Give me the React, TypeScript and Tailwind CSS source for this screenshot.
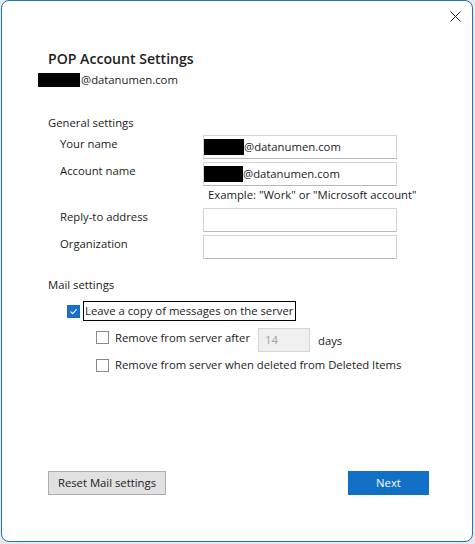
import React from "react"

function Redact({ w = 40 }: { w?: number }) {
  return <span className="inline-block h-[16px] bg-black shrink-0" style={{ width: w }} />
}

function Field({ children }: { children?: React.ReactNode }) {
  return (
    <div className="w-[194px] h-[24px] border border-[#d4d4d4] border-b-[#b8b8b8] bg-white flex items-center">
      {children}
    </div>
  )
}

function Row({ label, children }: { label: string; children?: React.ReactNode }) {
  return (
    <div className="flex items-start ml-[58px]">
      <div className="w-[143px] mt-[1px] leading-[16px] h-[16px]">{label}</div>
      {children}
    </div>
  )
}

function Check({ checked = false }: { checked?: boolean }) {
  return checked ? (
    <div className="w-[13px] h-[13px] bg-[#1a6fc7] flex items-center justify-center shrink-0">
      <svg width="9" height="9" viewBox="0 0 9 9">
        <path d="M1.5 4.6 L3.6 6.6 L7.6 2.4" stroke="white" strokeWidth="1.2" fill="none" />
      </svg>
    </div>
  ) : (
    <div className="block w-[13px] h-[13px] border border-[#8a8a8a] bg-white shrink-0" />
  )
}

export default function App() {
  return (
    <div className="w-[475px] h-[544px] bg-[#e9e9e9] overflow-hidden font-['Open_Sans',sans-serif] text-[11.3px] text-[#1b1b1b]">
      <div className="relative ml-[1px] w-[472px] h-[542px] bg-white border border-[#1e73c8] rounded-[8px] flex flex-col">
        <svg className="absolute right-[11px] top-[10px]" width="11" height="11" viewBox="0 0 11 11">
          <path d="M0.5 0.5 L10.5 10.5 M10.5 0.5 L0.5 10.5" stroke="#222" strokeWidth="1" />
        </svg>

        <div className="mt-[48px] ml-[46px] text-[14.1px] leading-[20px] font-semibold text-[#222]">
          POP Account Settings
        </div>
        <div className="mt-[3px] ml-[36px] flex items-center leading-[16px] h-[16px]">
          <span className="inline-block w-[42px] h-[14px] bg-black" />
          <span className="ml-[1px]">@datanumen.com</span>
        </div>

        <div className="mt-[27px] ml-[46px] leading-[16px]">General settings</div>

        <div className="mt-[4px] flex flex-col gap-[3px]">
          <Row label="Your name">
            <Field>
              <Redact />
              <span>@datanumen.com</span>
            </Field>
          </Row>
          <Row label="Account name">
            <Field>
              <Redact w={39} />
              <span>@datanumen.com</span>
            </Field>
          </Row>
        </div>
        <div className="mt-[1px] ml-[206px] leading-[16px]">Example: "Work" or "Microsoft account"</div>

        <div className="mt-[5px] flex flex-col gap-[3px]">
          <Row label="Reply-to address">
            <Field />
          </Row>
          <Row label="Organization">
            <Field />
          </Row>
        </div>

        <div className="mt-[18px] ml-[46px] leading-[16px]">Mail settings</div>

        <div className="mt-[8px] ml-[65px] flex items-center">
          <Check checked />
          <span className="ml-[3px] h-[20px] border border-black pl-[1px] pr-[2px] leading-[18px]">
            Leave a copy of messages on the server
          </span>
        </div>

        <div className="mt-[7px] ml-[94px] flex items-start h-[24px]">
          <div className="mt-[3px]">
            <Check />
          </div>
          <span className="ml-[6px] mt-[2px] leading-[16px] w-[143px]">Remove from server after</span>
          <div className="w-[52px] h-[24px] border border-[#d6d6d6] bg-[#f0f0f0] text-[#a0a0a0] flex items-center pl-[6px]">
            14
          </div>
          <span className="ml-[8px] mt-[5px] leading-[16px]">days</span>
        </div>

        <div className="mt-[5px] ml-[94px] flex items-center">
          <Check />
          <span className="ml-[6px] leading-[16px]">Remove from server when deleted from Deleted Items</span>
        </div>

        <div className="mt-auto mb-[46px] ml-[46px] mr-[43px] flex items-center">
          <button className="w-[118px] h-[24px] bg-[#e1e1e1] border border-[#adadad] text-[#1b1b1b] leading-[20px]">
            Reset Mail settings
          </button>
          <button className="ml-auto w-[81px] h-[24px] bg-[#1170c5] text-white leading-[24px]">Next</button>
        </div>
      </div>
    </div>
  )
}
